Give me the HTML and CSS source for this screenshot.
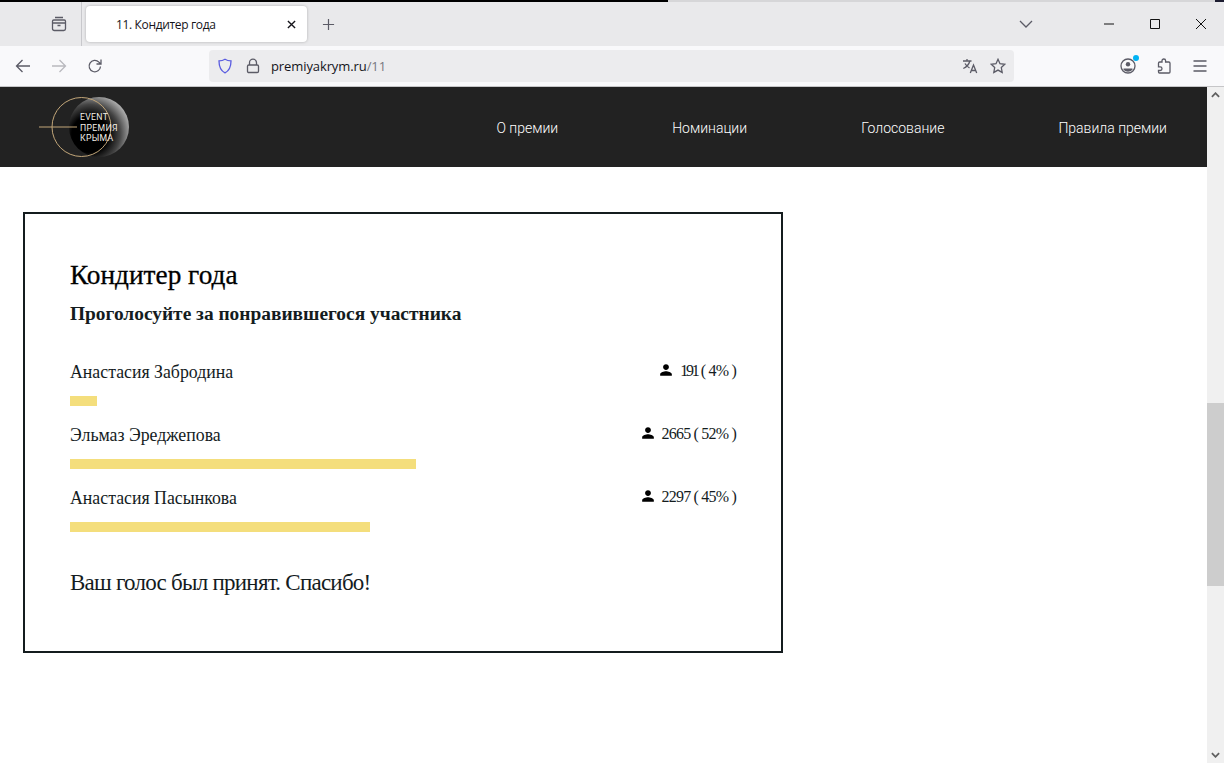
FILE: index.html
```html
<!DOCTYPE html>
<html lang="ru">
<head>
    <meta charset="UTF-8">
    <title>11. Кондитер года</title>
    <link rel="stylesheet" href="styles.css">
</head>
<body>
    <div class="top-strip"><span class="strip-dark"></span><span class="strip-light"></span><span class="strip-end"></span></div>

    <div class="tabbar">
        <div class="tab-view">
            <svg class="ico" viewBox="0 0 16 16"><path d="M4 1.500h8M2.800 4h10.400c.7 0 1.300.6 1.300 1.300v7.400c0 1-.8 1.800-1.800 1.800H3.300c-1 0-1.800-.8-1.800-1.800V5.300c0-.7.6-1.300 1.300-1.300zM1.500 7h13M6.500 9.500h3"/></svg>
        </div>
        <div class="tab">
            <span class="tab-title">11. Кондитер года</span>
            <svg class="tab-close" viewBox="0 0 10 10"><path d="M1 1l8 8M9 1L1 9"/></svg>
        </div>
        <svg class="ico tab-new" viewBox="0 0 14 14"><path d="M7 1v12M1 7h12"/></svg>
        <svg class="ico tab-list" viewBox="0 0 14 8"><path d="M1 1l6 6 6-6"/></svg>
        <div class="win-controls">
            <svg viewBox="0 0 12 12"><path d="M1 6h10"/></svg>
            <svg viewBox="0 0 12 12"><path d="M1.500 1.500h9v9h-9z"/></svg>
            <svg viewBox="0 0 12 12"><path d="M1 1l10 10M11 1L1 11"/></svg>
        </div>
    </div>

    <div class="toolbar">
        <div class="nav-buttons">
            <svg class="ico" viewBox="0 0 16 16"><path d="M15 8H1.500M7.500 2l-6 6 6 6"/></svg>
            <svg class="ico muted" viewBox="0 0 16 16"><path d="M1 8h13.500M8.500 2l6 6-6 6"/></svg>
            <svg class="ico" viewBox="0 0 16 16"><path d="M13.500 8.500a5.700 5.700 0 1 1-1.600-4.400l1.600 1.600M14 1.500v4.500H9.500"/></svg>
        </div>
        <div class="urlbar">
            <svg class="ico shield" viewBox="0 0 16 16"><path d="M8 1.200c2 1.200 4 1.600 6 1.700 0 5.500-1.500 9.600-6 11.900C3.500 12.500 2 8.400 2 2.900c2-.1 4-.5 6-1.700z"/></svg>
            <svg class="ico lock" viewBox="0 0 16 16"><path d="M4.500 7V4.700a3.500 3.500 0 0 1 7 0V7M3.800 7h8.400c.7 0 1.300.6 1.300 1.300v5c0 .7-.6 1.200-1.300 1.200H3.800c-.7 0-1.300-.5-1.300-1.200v-5c0-.7.6-1.300 1.300-1.300z"/></svg>
            <span class="url">premiyakrym.ru<span class="url-path">/11</span></span>
            <svg class="ico translate" viewBox="0 0 16 16"><path d="M1 3h8.500M5 1v2M7.800 3C7 6.500 4.500 9 1.300 10.500M3 5.500c1 2 2.500 3.300 4.500 4.300M8.300 15l3.200-8 3.200 8M9.500 12.500h4"/></svg>
            <svg class="ico star" viewBox="0 0 16 16"><path d="M8 1.300l2 4.400 4.800.6-3.500 3.300.9 4.800L8 12.100l-4.200 2.300.9-4.800-3.500-3.300 4.800-.6z"/></svg>
        </div>
        <div class="tool-buttons">
            <div class="account">
                <svg class="ico" viewBox="0 0 16 16"><circle cx="8" cy="8" r="7"/><circle class="solid" cx="8" cy="6.300" r="2.200"/><path class="solid" d="M3.500 10.500h9v1.300a6 6 0 0 1-9 0z"/></svg>
                <span class="account-dot"></span>
            </div>
            <svg class="ico" viewBox="0 0 16 16"><path d="M6 2.800C6 1.700 6.800 1 7.800 1s1.800.7 1.800 1.800V4h3.200c.6 0 1.200.5 1.200 1.200V14c0 .6-.5 1-1 1H3.500c-.7 0-1-.5-1-1v-1.500h1.700c1 0 1.800-.8 1.800-1.800S5.200 8.900 4.200 8.900H2.500V5.200C2.500 4.500 3 4 3.700 4H6z"/></svg>
            <svg class="ico" viewBox="0 0 16 16"><path d="M1.500 3h13M1.500 8h13M1.500 13h13"/></svg>
        </div>
    </div>

    <div class="viewport">
        <div class="page">
            <header class="site-header">
                <svg class="logo" viewBox="0 0 92 62">
                    <defs>
                        <radialGradient id="sphere" cx="0.35" cy="0.62" r="0.8">
                            <stop offset="0.38" stop-color="#000"/>
                            <stop offset="0.62" stop-color="#444"/>
                            <stop offset="0.85" stop-color="#aaa"/>
                            <stop offset="1" stop-color="#eee"/>
                        </radialGradient>
                    </defs>
                    <circle cx="60" cy="31" r="30" fill="url(#sphere)"/>
                    <circle class="logo-ring" cx="42.500" cy="31" r="29.500"/>
                    <path class="logo-line" d="M0 31h38"/>
                    <text x="41" y="24">EVENT</text>
                    <text x="41" y="34.500">ПРЕМИЯ</text>
                    <text x="41" y="45">КРЫМА</text>
                </svg>
                <nav class="site-nav">
                    <a href="#">О премии</a>
                    <a href="#">Номинации</a>
                    <a href="#">Голосование</a>
                    <a href="#">Правила премии</a>
                </nav>
            </header>

            <main class="vote-card">
                <h1>Кондитер года</h1>
                <h2>Проголосуйте за понравившегося участника</h2>

                <div class="vote-row">
                    <div class="vote-head">
                        <span class="vote-name">Анастасия Забродина</span>
                        <span class="vote-count">
                            <svg class="person" viewBox="0 0 24 24"><path d="M12 12c2.800 0 5-2.200 5-5s-2.200-5-5-5-5 2.200-5 5 2.200 5 5 5zm0 2c-3.300 0-10 1.700-10 5v3h20v-3c0-3.300-6.700-5-10-5z"/></svg>
                            <span><span class="count-tight">191</span> ( 4% )</span>
                        </span>
                    </div>
                    <div class="vote-bar" style="width: 27px"></div>
                </div>
                <div class="vote-row">
                    <div class="vote-head">
                        <span class="vote-name">Эльмаз Эреджепова</span>
                        <span class="vote-count">
                            <svg class="person" viewBox="0 0 24 24"><path d="M12 12c2.800 0 5-2.200 5-5s-2.200-5-5-5-5 2.200-5 5 2.200 5 5 5zm0 2c-3.300 0-10 1.700-10 5v3h20v-3c0-3.300-6.700-5-10-5z"/></svg>
                            <span>2665 ( 52% )</span>
                        </span>
                    </div>
                    <div class="vote-bar" style="width: 346px"></div>
                </div>
                <div class="vote-row">
                    <div class="vote-head">
                        <span class="vote-name">Анастасия Пасынкова</span>
                        <span class="vote-count">
                            <svg class="person" viewBox="0 0 24 24"><path d="M12 12c2.800 0 5-2.200 5-5s-2.200-5-5-5-5 2.200-5 5 2.200 5 5 5zm0 2c-3.300 0-10 1.700-10 5v3h20v-3c0-3.300-6.700-5-10-5z"/></svg>
                            <span>2297 ( 45% )</span>
                        </span>
                    </div>
                    <div class="vote-bar" style="width: 300px"></div>
                </div>

                <p class="vote-done">Ваш голос был принят. Спасибо!</p>
            </main>
        </div>

        <div class="scrollbar">
            <svg class="scroll-arrow" viewBox="0 0 10 6"><path d="M1 5l4-4 4 4"/></svg>
            <div class="scroll-thumb"></div>
            <svg class="scroll-arrow" viewBox="0 0 10 6"><path d="M1 1l4 4 4-4"/></svg>
        </div>
    </div>
</body>
</html>
```

FILE: styles.css
```css
html, body {
    margin: 0;
    height: 100%;
    overflow: hidden;
}
body {
    display: flex;
    flex-direction: column;
    background: #fff;
    font-family: "Liberation Serif", serif;
}
.ico {
    width: 16px;
    height: 16px;
    fill: none;
    stroke: #5b5b66;
    stroke-width: 1.3;
    flex: none;
}
.ico .solid {
    fill: #5b5b66;
    stroke: none;
}
.ico.muted {
    stroke: #b9b9be;
}

/* browser chrome */
.top-strip {
    display: flex;
    height: 2px;
    background: #d6d6d8;
}
.strip-dark {
    width: 668px;
    background: #000;
}
.strip-light {
    flex: 1;
}
.strip-end {
    width: 9px;
    background: #1c1c30;
}
.tabbar {
    display: flex;
    align-items: center;
    height: 44px;
    background: #e9e9eb;
}
.tab-view {
    display: flex;
    align-items: center;
    justify-content: center;
    box-sizing: border-box;
    width: 82px;
    height: 44px;
    padding-left: 37px;
    border-right: 1px solid #c8c8cc;
}
.tab {
    display: flex;
    align-items: center;
    justify-content: space-between;
    box-sizing: border-box;
    width: 221px;
    height: 36px;
    margin-left: 4px;
    padding: 0 11px 0 30px;
    background: #fff;
    border-radius: 4px;
    box-shadow: 0 0 3px rgba(0, 0, 0, 0.25);
}
.tab-title {
    font: 12px "Open Sans", sans-serif;
    letter-spacing: -0.35px;
    color: #15141a;
}
.tab-close {
    width: 9px;
    height: 9px;
    fill: none;
    stroke: #15141a;
    stroke-width: 1.5;
}
.tab-new {
    width: 13px;
    height: 13px;
    margin-left: 15px;
}
.tab-list {
    width: 14px;
    height: 8px;
    margin-left: 684px;
}
.win-controls {
    display: flex;
    gap: 34px;
    margin-left: 70px;
}
.win-controls svg {
    width: 12px;
    height: 12px;
    fill: none;
    stroke: #111;
    stroke-width: 1;
}
.toolbar {
    display: flex;
    align-items: center;
    height: 40px;
    background: #f9f9fb;
    border-bottom: 1px solid #c6c6c8;
}
.nav-buttons {
    display: flex;
    gap: 20px;
    padding-left: 15px;
    width: 209px;
    box-sizing: border-box;
}
.urlbar {
    display: flex;
    align-items: center;
    box-sizing: border-box;
    width: 805px;
    height: 32px;
    padding: 0 8px;
    background: #ececee;
    border-radius: 4px;
}
.shield {
    stroke: #5a5ce0;
}
.lock {
    margin-left: 12px;
}
.url {
    flex: 1;
    margin-left: 10px;
    font: 13px "Open Sans", sans-serif;
    letter-spacing: -0.1px;
    color: #15141a;
}
.url-path {
    color: #77777f;
}
.star {
    margin-left: 12px;
}
.tool-buttons {
    display: flex;
    gap: 20px;
    margin-left: 106px;
}
.account {
    position: relative;
    height: 16px;
}
.account-dot {
    position: absolute;
    top: -3px;
    right: -3px;
    width: 6px;
    height: 6px;
    border-radius: 50%;
    background: #00b3f4;
}

/* page */
.viewport {
    flex: 1;
    display: flex;
    min-height: 0;
}
.page {
    flex: 1;
    min-width: 0;
}
.site-header {
    display: flex;
    align-items: center;
    justify-content: space-between;
    height: 80px;
    padding: 0 40px 0 39px;
    background: #222;
}
.logo {
    width: 92px;
    height: 62px;
}
.logo text {
    font: 400 8.7px "Roboto", sans-serif;
    letter-spacing: 0.3px;
    fill: #f2eee6;
}
.logo-ring {
    fill: none;
    stroke: #c2a679;
    stroke-width: 1;
}
.logo-line {
    fill: none;
    stroke: #c2a679;
    stroke-width: 1.2;
}
.site-nav {
    display: flex;
    gap: 114px;
    padding-top: 2px;
}
.site-nav a {
    font: 300 14px "Roboto", sans-serif;
    color: #fff;
    text-decoration: none;
}
.vote-card {
    box-sizing: border-box;
    width: 760px;
    height: 441px;
    margin: 45px 0 0 23px;
    padding: 43px 45px 0;
    border: 2px solid #141c1e;
}
.vote-card h1 {
    margin: 0;
    font-size: 27.3px;
    line-height: 36px;
    font-weight: 400;
    color: #000;
    -webkit-text-stroke: 0.3px #000;
}
.vote-card h2 {
    margin: 7px 0 32px;
    font-size: 19.4px;
    line-height: 28px;
    font-weight: 700;
    color: #141c1e;
}
.vote-row {
    height: 63px;
}
.vote-head {
    display: flex;
    align-items: center;
    justify-content: space-between;
    height: 24px;
    margin-bottom: 12px;
}
.vote-name {
    font-size: 17.8px;
    color: #141c1e;
}
.vote-count {
    display: flex;
    align-items: center;
    gap: 7px;
    margin-bottom: 2px;
    font-size: 16px;
    letter-spacing: -0.8px;
    color: #141c1e;
}
.count-tight {
    letter-spacing: -2.2px;
}
.person {
    width: 14px;
    height: 14px;
    margin-bottom: 2px;
    fill: #000;
}
.vote-bar {
    height: 10px;
    background: #f4de7c;
}
.vote-done {
    margin: 18px 0 0;
    font-size: 23px;
    line-height: 32px;
    letter-spacing: -0.75px;
    color: #141c1e;
}
.scrollbar {
    display: flex;
    flex-direction: column;
    align-items: center;
    position: relative;
    width: 17px;
    background: #f0f0f0;
}
.scroll-arrow {
    width: 9px;
    height: 6px;
    margin: 5px 0;
    fill: none;
    stroke: #606060;
    stroke-width: 2;
}
.scroll-arrow:last-child {
    position: absolute;
    bottom: 0;
}
.scroll-thumb {
    width: 17px;
    height: 183px;
    margin-top: 300px;
    background: #cdcdcd;
}
```
